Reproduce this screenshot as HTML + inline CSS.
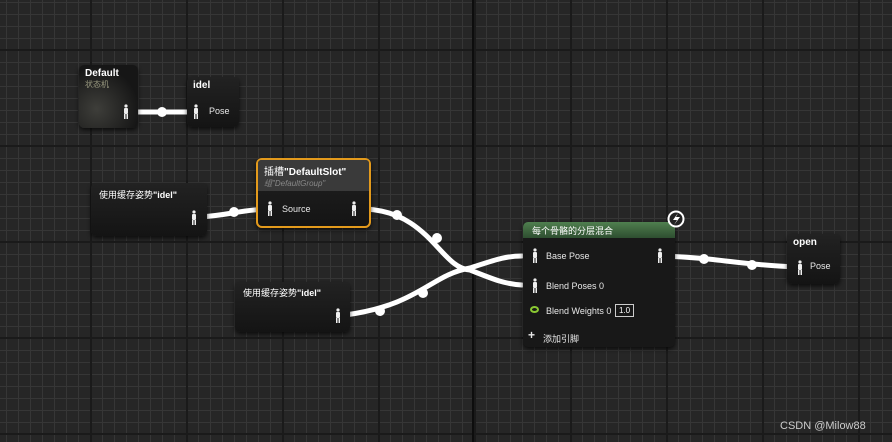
<!DOCTYPE html>
<html><head><meta charset="utf-8"><style>
*{margin:0;padding:0;box-sizing:border-box}
body{width:892px;height:442px;overflow:hidden;background:#262626;font-family:"Liberation Sans","Noto Sans CJK SC",sans-serif;color:#fff;position:relative}
.grid{position:absolute;inset:0;
background-image:
linear-gradient(90deg,#0d0d0d 0 2px,transparent 2px),
linear-gradient(0deg,#0d0d0d 0 2px,transparent 2px),
linear-gradient(90deg,#1a1a1a 0 2px,transparent 2px),
linear-gradient(0deg,#1a1a1a 0 2px,transparent 2px),
linear-gradient(90deg,#363636 0 1px,transparent 1px),
linear-gradient(0deg,#363636 0 1px,transparent 1px);
background-size:892px 442px,892px 442px,96px 96px,96px 96px,12px 12px,12px 12px;
background-position:472px 0,0 242px,90px 51px,90px 51px,6px 3px,6px 3px;
background-repeat:no-repeat,no-repeat,repeat,repeat,repeat,repeat}
.n{position:absolute;background:linear-gradient(#222,#141414);border-radius:5px;box-shadow:0 2px 4px rgba(0,0,0,.7);font-size:9px}
.t{font-weight:bold;font-size:10px;padding:3px 6px}
.lbl{position:absolute;font-size:9px;color:#e8e8e8}
svg{position:absolute;left:0;top:0}
</style></head><body>
<div class="grid"></div>
<svg width="892" height="442">
<g stroke="#fff" stroke-width="5" fill="none" stroke-linecap="round">
<path d="M130 112 L196 112"/>
<path d="M200 217 C230 215 240 210 268 209"/>
<path d="M365 209 C430 212 440 268 470 270 C495 280 505 284 522 285"/>
<path d="M345 315 C420 305 430 275 470 268 C495 260 505 256 522 256"/>
<path d="M662 256 C720 258 740 265 797 267"/>
</g>
<g fill="#fff"><circle cx="162" cy="112" r="5"/><circle cx="234" cy="212" r="5"/><circle cx="397" cy="215" r="5"/><circle cx="437" cy="238" r="5"/><circle cx="380" cy="311" r="5"/><circle cx="423" cy="293" r="5"/><circle cx="704" cy="259" r="5"/><circle cx="752" cy="265" r="5"/></g>
</svg>
<div class="n" style="left:79px;top:65px;width:59px;height:63px;background:radial-gradient(circle at 30% 70%,#3e3e3a,#161616 70%)"><div class="t">Default</div><div style="color:#9a9a80;font-size:8px;padding:0 6px;margin-top:-3px">状态机</div></div>
<div class="n" style="left:187px;top:77px;width:52px;height:50px"><div class="t">idel</div><div class="lbl" style="left:22px;top:29px">Pose</div></div>
<div class="n" style="left:91px;top:183px;width:116px;height:53px"><div class="t" style="font-weight:normal;font-size:9px;padding:5px 8px">使用缓存姿势<b>"idel"</b></div></div>
<div class="n" style="left:256px;top:158px;width:115px;height:70px;border:2px solid #e39a1c;border-radius:6px"><div style="background:#3a3a3a;height:31px;border-radius:3px 3px 0 0;padding:3px 6px;font-size:10px">插槽<b>"DefaultSlot"</b><div style="color:#888;font-size:8px;font-style:italic">组"DefaultGroup"</div></div><div class="lbl" style="left:24px;top:44px">Source</div></div>
<div class="n" style="left:235px;top:282px;width:115px;height:50px"><div class="t" style="font-weight:normal;font-size:9px;padding:4px 8px">使用缓存姿势<b>"idel"</b></div></div>
<div class="n" style="left:523px;top:222px;width:152px;height:125px;background:#181818"><div style="background:linear-gradient(#4f7f4f,#2e4e30);height:16px;border-radius:5px 5px 0 0;padding:2px 9px;font-size:9px">每个骨骼的分层混合</div>
<div class="lbl" style="left:23px;top:29px">Base Pose</div>
<div class="lbl" style="left:23px;top:59px">Blend Poses 0</div>
<div style="position:absolute;left:7px;top:84px;width:9px;height:7px;border:2px solid #8ac832;border-radius:50%"></div>
<div class="lbl" style="left:23px;top:84px">Blend Weights 0</div>
<div style="position:absolute;left:92px;top:82px;width:19px;height:13px;border:1px solid #ccc;font-size:8px;text-align:center;line-height:11px">1.0</div>
<div class="lbl" style="left:5px;top:106px;font-size:12px;font-weight:bold">+</div><div class="lbl" style="left:20px;top:110px">添加引脚</div>
</div>
<svg width="892" height="442"><circle cx="676" cy="219" r="7.5" fill="#222" stroke="#fff" stroke-width="2"/><path d="M678 213 L673 220 L677 220 L674 225 L680 217 L676 217 Z" fill="#fff"/></svg>
<div class="n" style="left:787px;top:234px;width:53px;height:50px"><div class="t">open</div><div class="lbl" style="left:23px;top:27px">Pose</div></div>
<svg width="892" height="442"><defs><g id="m"><circle cx="0" cy="-5" r="1.6"/><rect x="-2" y="-3" width="4" height="6" rx="1"/><rect x="-2" y="3" width="1.5" height="5"/><rect x="0.5" y="3" width="1.5" height="5"/></g></defs><g fill="#eee">
<use href="#m" x="126" y="111"/><use href="#m" x="196" y="111"/><use href="#m" x="194" y="217"/><use href="#m" x="270" y="208"/><use href="#m" x="354" y="208"/><use href="#m" x="338" y="315"/><use href="#m" x="535" y="255"/><use href="#m" x="660" y="255"/><use href="#m" x="535" y="285"/><use href="#m" x="800" y="267"/></g></svg>
<div style="position:absolute;left:780px;top:420px;font-size:11px;color:#ccc">CSDN @Milow88</div>
</body></html>
